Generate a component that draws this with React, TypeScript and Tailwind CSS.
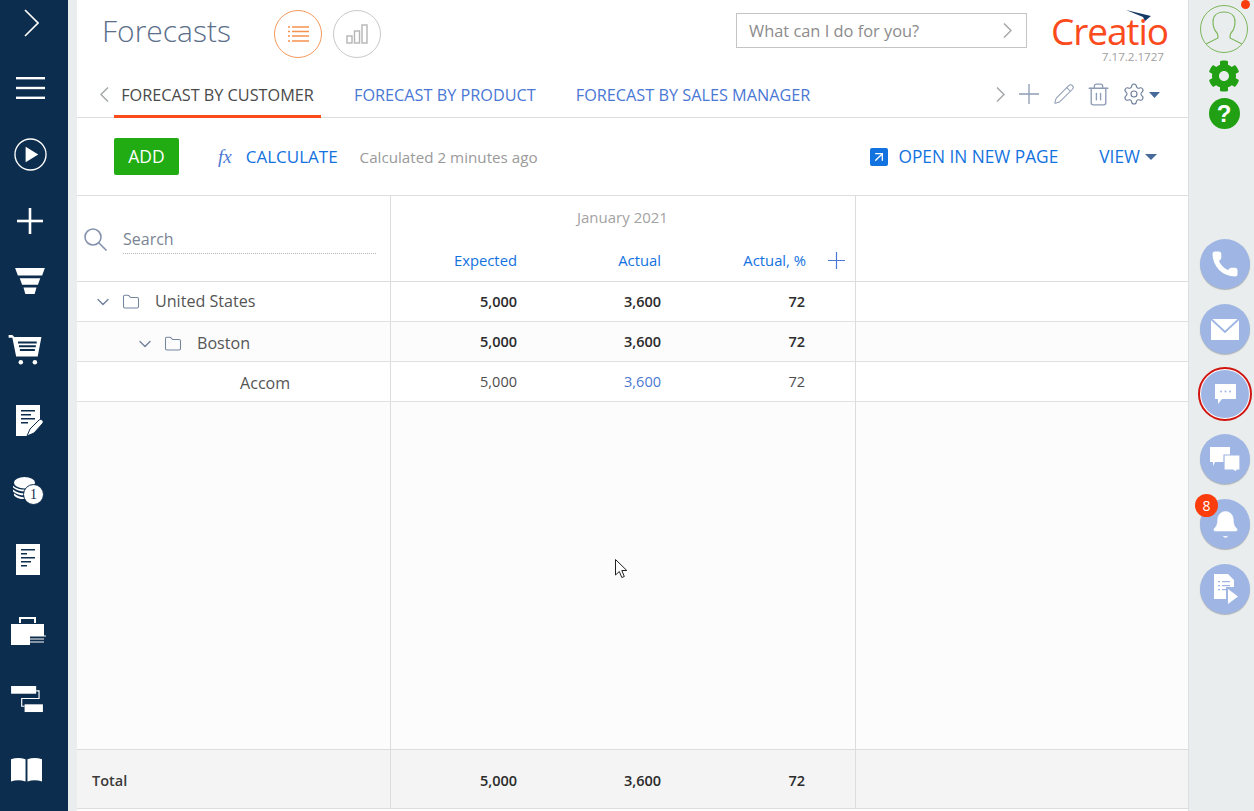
import { ChevronDown, Pencil, Trash2, Settings, Folder, Phone, Bell, ArrowUpRight } from "lucide-react";
import { FaCog } from "react-icons/fa";
import { ReactNode } from "react";

function Caret({ className }: { className: string }) {
  return (
    <svg width="11" height="6" viewBox="0 0 11 6" className={className}>
      <path d="M0 0h11L5.500 6z" fill="currentColor" />
    </svg>
  );
}

function Chev({ left, className }: { left?: boolean; className: string }) {
  return (
    <svg width="9" height="15" viewBox="0 0 9 15" fill="none" stroke="currentColor" strokeWidth="1.5" className={className}>
      <path d={left ? "M8 .5L1 7.500l7 7" : "M1 .5l7 7-7 7"} />
    </svg>
  );
}

function NavItem({ className, children }: { className: string; children: ReactNode }) {
  return <div className={`flex shrink-0 items-center justify-center ${className}`}>{children}</div>;
}

function Sidebar() {
  return (
    <div className="w-[68px] shrink-0 bg-[#0d2d4e] text-white flex flex-col pr-[8px]">
      <NavItem className="mt-[9px] h-[28px] ml-[2px]">
        <svg width="15" height="28" viewBox="0 0 15 28" fill="none" stroke="currentColor" strokeWidth="1.6"><path d="M1 1l13 13L1 27" /></svg>
      </NavItem>
      <NavItem className="mt-[40px] h-[22px]">
        <svg width="29" height="22" viewBox="0 0 29 22" fill="currentColor"><rect width="29" height="2.400" /><rect y="9.800" width="29" height="2.400" /><rect y="19.600" width="29" height="2.400" /></svg>
      </NavItem>
      <NavItem className="mt-[39px] h-[32px]">
        <svg width="33" height="33" viewBox="0 0 34 34"><circle cx="17" cy="17" r="16" fill="none" stroke="#fff" strokeWidth="1.400" /><path d="M12 9l13 8-13 8z" fill="#fff" /></svg>
      </NavItem>
      <NavItem className="mt-[38px] h-[25px]">
        <svg width="26" height="26" viewBox="0 0 26 26" fill="currentColor"><rect y="11.700" width="26" height="2.600" /><rect x="11.700" width="2.600" height="26" /></svg>
      </NavItem>
      <NavItem className="mt-[35px] h-[27px]">
        <svg width="30" height="27" viewBox="0 0 32 29" fill="currentColor"><path d="M0 0h32l-3 8H3z" /><path d="M5 11h22l-2.500 7h-17z" /><path d="M9 21h14l-2 7h-10z" /></svg>
      </NavItem>
      <NavItem className="mt-[40px] h-[30px] mr-[9px]">
        <svg width="35" height="30" viewBox="0 0 36 32" fill="currentColor">
          <path d="M0 0h4l2 2h29l-4 21H8L4 3H0z" />
          <path d="M10 7h20v2H10zM11 11h18v2H11zM12 15h16v2H12z" fill="#0d2d4e" />
          <circle cx="13" cy="29" r="2.400" /><circle cx="28" cy="29" r="2.400" />
        </svg>
      </NavItem>
      <NavItem className="mt-[40px] h-[32px]">
        <svg width="28" height="32" viewBox="0 0 28 32" fill="currentColor">
          <path d="M0 0h24v15L12 31H0z" />
          <path d="M5 5h14v1.500H5zM5 9h10v1.500H5zM5 13h14v1.500H5zM5 17h7v1.500H5z" fill="#0d2d4e" />
          <path d="M11 31l3-7 9-9c2-1.500 5 .5 4 3l-9 10z" stroke="#0d2d4e" strokeWidth="1" />
        </svg>
      </NavItem>
      <NavItem className="mt-[40px] h-[28px] mr-[5px]">
        <div className="relative w-[31px] h-[28px]">
          <svg width="25" height="23" viewBox="0 0 24 24" fill="currentColor" className="block">
            <ellipse cx="12" cy="6" rx="11" ry="6" />
            <path d="M0 9c3 3 8 4 12 4v2C8 15 3 14 0 11zM0 13c3 3 8 4 12 4v2c-4 0-9-1-12-4zM1 17c3 3 7 4 11 4v2c-4 0-9-1-11-4z" />
          </svg>
          <div className="absolute left-[11px] top-[7px] w-[21px] h-[21px] rounded-full bg-white border border-[#0d2d4e] text-[#0d2d4e] flex items-center justify-center text-[14px] leading-none font-['Liberation_Serif',serif]">1</div>
        </div>
      </NavItem>
      <NavItem className="mt-[39px] h-[31px] mr-[4px]">
        <svg width="24" height="31" viewBox="0 0 24 31" fill="currentColor">
          <path d="M0 0h24v31H0z" />
          <path d="M5 5h14v1.500H5zM5 9h6v1.500H5zM5 13h14v1.500H5zM5 17h10v1.500H5zM5 21h6v1.500H5z" fill="#0d2d4e" />
        </svg>
      </NavItem>
      <NavItem className="mt-[41px] h-[29px] mr-[3px]">
        <svg width="35" height="30" viewBox="0 0 35 30" fill="currentColor">
          <path d="M8 7V1h17v6h-2V3H10v4z" />
          <path d="M0 8h33v12H19v9H0z" />
          <path d="M19 20h16M19 23h14M19 26h14" stroke="#fff" strokeWidth="1" />
        </svg>
      </NavItem>
      <NavItem className="mt-[41px] h-[27px] mr-[6px]">
        <svg width="32" height="27" viewBox="0 0 33 28" fill="none">
          <rect width="26" height="8" fill="#fff" />
          <rect x="14" y="19" width="19" height="8" fill="#fff" />
          <path d="M26 5h3v8H11v8h3" stroke="#fff" strokeWidth="1.200" />
        </svg>
      </NavItem>
      <NavItem className="mt-[44px] h-[25px] mr-[7px]">
        <svg width="31" height="25" viewBox="0 0 32 25" fill="currentColor">
          <path d="M0 2c5-2 10-2 15 0v23c-5-2-10-2-15 0zM17 2c5-2 10-2 15 0v23c-5-2-10-2-15 0z" />
        </svg>
      </NavItem>
    </div>
  );
}

function Header() {
  return (
    <div className="h-[118px] shrink-0 border-b border-[#dcdfe0] relative">
      <div className="flex items-start h-[73px]">
        <div className="ml-[25px] mt-[10px] w-[172px] text-[30px] leading-[42px] font-light text-[#5b6e8a]">Forecasts</div>
        <div className="mt-[10px] w-[48px] h-[48px] rounded-full border border-[#f59a5c] flex items-center justify-center">
          <svg width="21" height="16" viewBox="0 0 21 16" fill="none" stroke="#f5914e" strokeWidth="1.300">
            <path d="M0 1h2M4 1h17M0 5.500h2M4 5.500h17M0 10h2M4 10h17M0 15h2M4 15h17" />
          </svg>
        </div>
        <div className="ml-[11px] mt-[10px] w-[48px] h-[48px] rounded-full border border-[#c9c9c9] flex items-center justify-center">
          <svg width="22" height="20" viewBox="0 0 22 20" fill="none" stroke="#b5b5b5" strokeWidth="1.400">
            <rect x="1" y="12" width="5" height="7" /><rect x="8.500" y="7" width="5" height="12" /><rect x="16" y="1" width="5" height="18" />
          </svg>
        </div>
        <div className="ml-[355px] mt-[13px] w-[291px] h-[35px] border border-[#c4c4c4] flex items-center justify-between pl-[12px] pr-[14px]">
          <span className="text-[16.400px] text-[#8c8c8c] pt-[1px]">What can I do for you?</span>
          <Chev className="text-[#a8a8a8]" />
        </div>
        <div className="ml-[24px] mt-[11px] w-[120px] relative">
          <div className="text-[37px] leading-[40px] text-[#fb4a1c] tracking-[-1.100px]">Creatio</div>
          <svg width="26" height="12" viewBox="0 0 26 12" className="absolute left-[75px] -top-[1px]"><path d="M0 0l25 6-6 5-2-4z" fill="#153a66" /></svg>
          <div className="text-[11.600px] leading-[12px] text-[#a0a0a0] text-right pr-[7px]">7.17.2.1727</div>
        </div>
      </div>
      <div className="flex items-start h-[45px] pr-[28px]">
        <Chev left className="ml-[23px] mt-[14px] text-[#a5a8ab] shrink-0" />
        <div className="ml-[5px] h-[45px] w-[207px] border-b-[3px] border-[#fb4a1c] text-[16.250px] leading-[44px] text-[#4a4a4a] text-center relative z-10">FORECAST BY CUSTOMER</div>
        <div className="ml-[33px] text-[16.250px] leading-[44px] text-[#4a78d4]">FORECAST BY PRODUCT</div>
        <div className="ml-[40px] text-[16.250px] leading-[44px] text-[#4a78d4]">FORECAST BY SALES MANAGER</div>
        <Chev className="ml-auto mt-[14px] text-[#a5a8ab] shrink-0" />
        <svg width="20" height="20" viewBox="0 0 20 20" fill="none" stroke="#8e9cb5" strokeWidth="1.300" className="ml-[14px] mt-[11px] shrink-0"><path d="M0 10h20M10 0v20" /></svg>
        <Pencil size={22} strokeWidth={1.100} className="ml-[14px] mt-[10px] text-[#8e9cb5] shrink-0" />
        <Trash2 size={25} strokeWidth={1.300} className="ml-[11px] mt-[9px] text-[#8e9cb5] shrink-0" />
        <Settings size={24} strokeWidth={1.100} className="ml-[11px] mt-[9px] text-[#6c7d99] shrink-0" />
        <Caret className="ml-[3px] mt-[19px] text-[#476a9b] shrink-0" />
      </div>
    </div>
  );
}

function Toolbar() {
  return (
    <div className="h-[78px] shrink-0 border-b border-[#dcdfe0] flex items-start pr-[31px]">
      <div className="ml-[37px] mt-[20px] w-[65px] h-[37px] rounded-[2px] bg-[#22ac14] text-white text-[17.500px] flex items-center justify-center">ADD</div>
      <div className="ml-[39px] mt-[26px] text-[19px] leading-[26px] italic text-[#4a78d4] font-['Liberation_Serif',serif]">fx</div>
      <div className="ml-[14px] mt-[26px] text-[17px] leading-[26px] text-[#1272e0]">CALCULATE</div>
      <div className="ml-[22px] mt-[28px] text-[15.200px] leading-[22px] text-[#9a9a9a]">Calculated 2 minutes ago</div>
      <div className="ml-auto mt-[30px] w-[18px] h-[18px] rounded-[2px] bg-[#1272e0] flex items-center justify-center">
        <ArrowUpRight size={16} strokeWidth={2} className="text-white" />
      </div>
      <div className="ml-[10px] mt-[26px] text-[17.300px] leading-[26px] text-[#1272e0]">OPEN IN NEW PAGE</div>
      <div className="ml-[41px] mt-[26px] text-[17.300px] leading-[26px] text-[#1272e0]">VIEW</div>
      <svg width="12" height="6" viewBox="0 0 12 6" className="ml-[5px] mt-[36px] text-[#476a9b]"><path d="M0 0h12L6 6z" fill="currentColor" /></svg>
    </div>
  );
}

function Numbers({ a, b, c, bold, link, className }: { a: string; b: string; c: string; bold?: boolean; link?: boolean; className?: string }) {
  const weight = bold ? "font-semibold text-[#2b2b2b]" : "text-[#4d4d4d]";
  return (
    <div className={`grid grid-cols-[126px_144px_144px] items-center text-right text-[14.500px] ${weight} ${className ?? ""}`}>
      <div>{a}</div>
      <div className={link ? "text-[#4a78d4]" : ""}>{b}</div>
      <div>{c}</div>
    </div>
  );
}

function Row({ name, indent, folder, bold, link, tone }: { name: string; indent: string; folder?: boolean; bold?: boolean; link?: boolean; tone: string }) {
  return (
    <div className={`h-[40px] shrink-0 border-b border-[#e0e0e0] grid grid-cols-[314px_465px_1fr] ${tone}`}>
      <div className={`border-r border-[#dcdcdc] flex items-center ${indent}`}>
        {folder && <ChevronDown size={20} strokeWidth={1.700} className="text-[#74839e] mr-[9px]" />}
        {folder && <Folder size={18} strokeWidth={1.400} className="text-[#74839e] mr-[15px]" />}
        <span className="text-[16.100px] text-[#555]">{name}</span>
      </div>
      <div className="border-r border-[#dcdcdc] flex items-center">
        <Numbers a="5,000" b="3,600" c="72" bold={bold} link={link} className="w-full pt-[1px]" />
      </div>
      <div />
    </div>
  );
}

function ForecastTable() {
  return (
    <div className="flex-1 flex flex-col min-h-0">
      <div className="h-[86px] shrink-0 border-b border-[#dcdcdc] grid grid-cols-[314px_465px_1fr]">
        <div className="border-r border-[#dcdcdc] flex items-start">
          <svg width="24" height="23" viewBox="0 0 24 23" fill="none" stroke="#8492ad" strokeWidth="1.600" className="ml-[7px] mt-[32px] shrink-0">
            <circle cx="9" cy="9" r="8" /><path d="M14.500 14.500l8 8" />
          </svg>
          <div className="ml-[15px] mt-[31px] w-[253px] h-[27px] border-b border-dotted border-[#b5b5b5] text-[16px] leading-[25px] text-[#7b8494]">Search</div>
        </div>
        <div className="border-r border-[#dcdcdc] relative">
          <div className="pt-[10px] pl-[186px] text-[15px] leading-[22px] text-[#a3a3a3]">January 2021</div>
          <div className="flex items-center mt-[21px]">
            <div className="w-[415px] grid grid-cols-[126px_144px_145px] text-right text-[14.800px] leading-[22px] text-[#1272e0]">
              <div>Expected</div>
              <div>Actual</div>
              <div>Actual, %</div>
            </div>
            <svg width="17" height="17" viewBox="0 0 17 17" fill="none" stroke="#4a78d4" strokeWidth="1.200" className="ml-[22px]"><path d="M0 8.500h17M8.500 0v17" /></svg>
          </div>
        </div>
        <div />
      </div>
      <Row name="United States" indent="pl-[16px]" folder bold tone="bg-white" />
      <Row name="Boston" indent="pl-[58px] pt-[4px]" folder bold tone="bg-[#fcfcfc]" />
      <Row name="Accom" indent="pl-[163px] pt-[4px]" link tone="bg-white" />
      <div className="flex-1 grid grid-cols-[314px_465px_1fr] bg-[#fcfcfc] border-b border-[#dcdcdc]">
        <div className="border-r border-[#dcdcdc]" />
        <div className="border-r border-[#dcdcdc]" />
        <div />
      </div>
      <div className="h-[59px] shrink-0 grid grid-cols-[314px_465px_1fr] bg-[#f4f4f4] border-b border-[#dcdcdc]">
        <div className="border-r border-[#dcdcdc] pl-[15px] pt-[3px] flex items-center text-[14.500px] font-semibold text-[#3a3a3a]">Total</div>
        <div className="border-r border-[#dcdcdc] flex items-center">
          <Numbers a="5,000" b="3,600" c="72" bold className="w-full pt-[3px]" />
        </div>
        <div />
      </div>
      <div className="h-[2px] shrink-0 bg-white" />
    </div>
  );
}

function Bubble({ ring, badge, children, className }: { ring?: boolean; badge?: string; children: ReactNode; className: string }) {
  return (
    <div className={`relative w-[50px] h-[50px] shrink-0 rounded-full bg-[#9fb6e5] shadow-[0_1px_1px_rgba(0,0,0,0.25)] flex items-center justify-center text-white ${className}`}>
      {ring && <div className="absolute -inset-[2px] rounded-full border-[2.500px] border-[#d0140f] bg-white p-[1px]"><div className="w-full h-full rounded-full bg-[#9fb6e5]" /></div>}
      <div className="relative flex">{children}</div>
      {badge && <div className="absolute -left-[5px] -top-[5px] w-[23px] h-[23px] rounded-full bg-[#fb3c0c] text-white text-[14px] flex items-center justify-center">{badge}</div>}
    </div>
  );
}

function RightRail() {
  return (
    <div className="w-[65px] shrink-0 bg-[#e9eded] flex flex-col items-center pl-[7px] relative">
      <div className="absolute left-[52px] top-0 w-[9px] h-[9px] rounded-full bg-[#fb3c0c]" />
      <div className="mt-[5px] -ml-[2px] w-[48px] h-[48px] shrink-0 rounded-full border border-[#7cb65c] overflow-hidden">
        <svg width="46" height="46" viewBox="0 0 46 46" fill="none" stroke="#7cb65c" strokeWidth="1.200">
          <path d="M16 27c-2-2-4-6-4-11 0-6 4-10 11-10s11 4 11 10c0 5-2 9-4 11-1 1-1 3-1 5l12 6M16 27c1 1 1 3 1 5L5 38" />
        </svg>
      </div>
      <FaCog size={32} className="mt-[7px] -ml-[2px] text-[#22a014] shrink-0" />
      <div className="mt-[6px] -ml-[2px] w-[31px] h-[31px] shrink-0 rounded-full bg-[#22a014] text-white flex items-center justify-center text-[24px] font-bold font-['Liberation_Sans',sans-serif] leading-none">?</div>

      <Bubble className="mt-[110px]"><Phone size={30} strokeWidth={0} fill="currentColor" /></Bubble>
      <Bubble className="mt-[15px]">
        <svg width="28" height="21" viewBox="0 0 28 21"><rect width="28" height="21" fill="#fff" /><path d="M0 0l14 13L28 0" fill="none" stroke="#9fb6e5" strokeWidth="2" /></svg>
      </Bubble>
      <Bubble ring className="mt-[15px]">
        <svg width="21" height="20" viewBox="0 0 21 20"><path d="M0 0h21v15H7l-4 5v-5H0z" fill="#fff" /><circle cx="6" cy="7.500" r="1" fill="#9fb6e5" /><circle cx="10.500" cy="7.500" r="1" fill="#9fb6e5" /><circle cx="15" cy="7.500" r="1" fill="#9fb6e5" /></svg>
      </Bubble>
      <Bubble className="mt-[15px]">
        <svg width="30" height="25" viewBox="0 0 30 25" fill="#fff">
          <path d="M0 0h20v15H5l-2 4v-4H0z" />
          <path d="M14 8h16v15h-3l-1 2-3-2H14z" stroke="#9fb6e5" strokeWidth="1.200" />
        </svg>
      </Bubble>
      <Bubble badge="8" className="mt-[15px]"><Bell size={31} strokeWidth={0.500} fill="currentColor" /></Bubble>
      <Bubble className="mt-[15px]">
        <svg width="24" height="31" viewBox="0 0 24 31" fill="#fff" className="ml-[2px]">
          <path d="M0 0h14l6 6v7L12 13v12H0z" />
          <path d="M14 15l10 7.500L14 30z" />
          <path d="M4 7h2v1.300H4zM8 7h8v1.300H8zM4 11h2v1.300H4zM8 11h8v1.300H8zM4 15h2v1.300H4zM8 15h4v1.300H8z" fill="#9fb6e5" />
        </svg>
      </Bubble>
    </div>
  );
}

export default function App() {
  return (
    <div className="h-[811px] w-[1254px] flex overflow-hidden bg-[#e9eded] font-['Open_Sans',sans-serif] relative">
      <Sidebar />
      <div className="w-[9px] shrink-0 bg-[#e9eded]" />
      <div className="w-[1112px] shrink-0 bg-white flex flex-col border-r border-[#dcdfe0]">
        <Header />
        <Toolbar />
        <ForecastTable />
      </div>
      <RightRail />
      {/* mouse pointer from the recording */}
      <svg width="13" height="20" viewBox="0 0 13 20" className="absolute left-[615px] top-[559px]">
        <path d="M.5.500v15.500l3.800-3.500 2.500 6 2.500-1-2.500-6h5z" fill="#fff" stroke="#222" strokeWidth="1" />
      </svg>
    </div>
  );
}
